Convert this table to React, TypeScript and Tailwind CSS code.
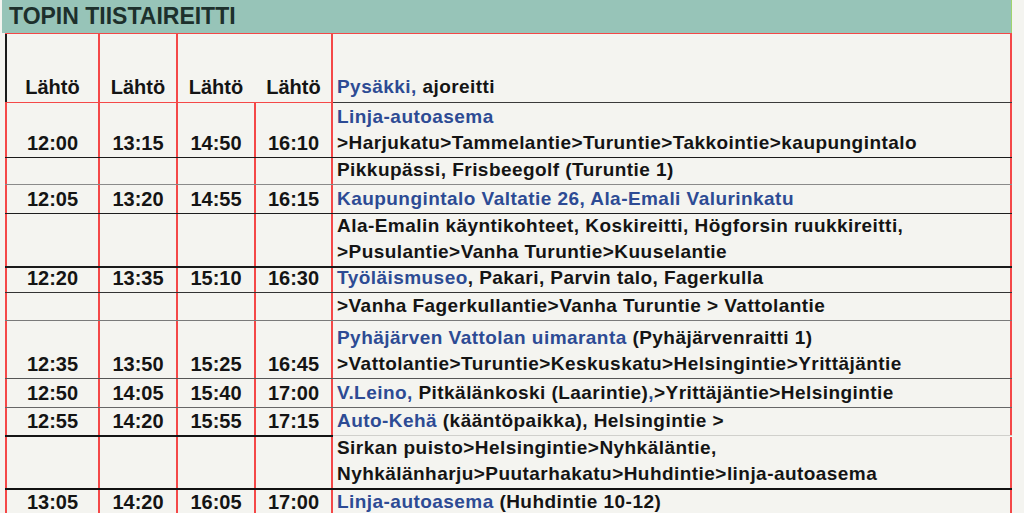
import React from 'react';

type Seg = { t: string; blue?: boolean };

type Row = {
  line: string; // height of the rule above the row
  tl: string; // rule over the time columns
  rl: string; // rule over the route column
  h: string;
  times?: string[];
  lines: Seg[][];
};

const B = (t: string): Seg => ({ t, blue: true });
const K = (t: string): Seg => ({ t });

const timeCols = [
  'w-[95px] border-x-2 border-[#f44848]',
  'w-[78px] border-r-2 border-[#f44848]',
  'w-[78px] border-r-2 border-[#f44848]',
  'w-[77px] border-r-2 border-[#f44848]',
];

const rows: Row[] = [
  {
    line: 'h-px',
    tl: 'h-px bg-[#f44848]',
    rl: 'h-px bg-[#3a3a3a]',
    h: 'h-[54px]',
    times: ['12:00', '13:15', '14:50', '16:10'],
    lines: [[B('Linja-autoasema')], [K('>Harjukatu>Tammelantie>Turuntie>Takkointie>kaupungintalo')]],
  },
  {
    line: 'h-px',
    tl: 'h-px bg-[#1a1a1a]',
    rl: 'h-px bg-[#1a1a1a]',
    h: 'h-[26px]',
    lines: [[K('Pikkupässi, Frisbeegolf (Turuntie 1)')]],
  },
  {
    line: 'h-px',
    tl: 'h-px bg-[#8a8a8a]',
    rl: 'h-px bg-[#8a8a8a]',
    h: 'h-[28px]',
    times: ['12:05', '13:20', '14:55', '16:15'],
    lines: [[B('Kaupungintalo Valtatie 26, Ala-Emali Valurinkatu')]],
  },
  {
    line: 'h-px',
    tl: 'h-px bg-[#1e1e1e]',
    rl: 'h-px bg-[#1e1e1e]',
    h: 'h-[52px]',
    lines: [
      [K('Ala-Emalin käyntikohteet, Koskireitti, Högforsin ruukkireitti,')],
      [K('>Pusulantie>Vanha Turuntie>Kuuselantie')],
    ],
  },
  {
    line: 'h-[2px]',
    tl: 'h-[2px] bg-[#1a1a1a]',
    rl: 'h-[2px] bg-[#1a1a1a]',
    h: 'h-[24px]',
    times: ['12:20', '13:35', '15:10', '16:30'],
    lines: [[B('Työläismuseo'), K(', Pakari, Parvin talo, Fagerkulla')]],
  },
  {
    line: 'h-px',
    tl: 'h-px bg-[#333333]',
    rl: 'h-px bg-[#333333]',
    h: 'h-[27px]',
    lines: [[K('>Vanha Fagerkullantie>Vanha Turuntie > Vattolantie')]],
  },
  {
    line: 'h-px',
    tl: 'h-px bg-[#7a7a7a]',
    rl: 'h-px bg-[#7a7a7a]',
    h: 'h-[57px]',
    times: ['12:35', '13:50', '15:25', '16:45'],
    lines: [
      [B('Pyhäjärven Vattolan uimaranta'), K(' (Pyhäjärvenraitti 1)')],
      [K('>Vattolantie>Turuntie>Keskuskatu>Helsingintie>Yrittäjäntie')],
    ],
  },
  {
    line: 'h-px',
    tl: 'h-px bg-[#555555]',
    rl: 'h-px bg-[#555555]',
    h: 'h-[28px]',
    times: ['12:50', '14:05', '15:40', '17:00'],
    lines: [[B('V.Leino,'), K(' Pitkälänkoski (Laarintie)'), B(','), K('>Yrittäjäntie>Helsingintie')]],
  },
  {
    line: 'h-px',
    tl: 'h-px bg-[#666666]',
    rl: 'h-px bg-[#666666]',
    h: 'h-[27px]',
    times: ['12:55', '14:20', '15:55', '17:15'],
    lines: [[B('Auto-Kehä'), K(' (kääntöpaikka), Helsingintie >')]],
  },
  {
    line: 'h-[2px]',
    tl: 'h-[2px] bg-[#151515]',
    rl: 'h-px bg-[#d0d0cc]',
    h: 'h-[51px]',
    lines: [
      [K('Sirkan puisto>Helsingintie>Nyhkäläntie,')],
      [K('Nyhkälänharju>Puutarhakatu>Huhdintie>linja-autoasema')],
    ],
  },
  {
    line: 'h-[2px]',
    tl: 'h-[2px] bg-[#111111]',
    rl: 'h-[2px] bg-[#111111]',
    h: 'h-[26px]',
    times: ['13:05', '14:20', '16:05', '17:00'],
    lines: [[B('Linja-autoasema'), K(' (Huhdintie 10-12)')]],
  },
];

const Line = ({ segs }: { segs: Seg[] }) => (
  <div className="whitespace-pre">
    {segs.map((s, i) => (
      <span key={i} className={s.blue ? 'text-[#2d4b94]' : 'text-[#141414]'}>
        {s.t}
      </span>
    ))}
  </div>
);

const TableRow = ({ row }: { row: Row }) => (
  <>
    <div className={`flex items-start ${row.line}`}>
      <div className={`w-[328px] ${row.tl}`} />
      <div className={`w-[679px] ${row.rl}`} />
    </div>
    <div className={`flex ${row.h}`}>
      {timeCols.map((w, i) => (
        <div key={i} className={`${w} flex items-end justify-center pb-[1px] text-[20px] text-[#141414]`}>
          {row.times?.[i]}
        </div>
      ))}
      <div className="flex w-[679px] flex-col justify-end border-r-2 border-[#f44848] pb-[1px] pl-[4px] tracking-[0.45px]">
        {row.lines.map((l, i) => (
          <Line key={i} segs={l} />
        ))}
      </div>
    </div>
  </>
);

export default function App() {
  return (
    <div
      className="h-[513px] w-[1024px] overflow-hidden bg-[#f4f4f0] font-bold"
      style={{ fontFamily: '"Liberation Sans", Arial, sans-serif' }}
    >
      <div className="ml-[2px] flex h-[33px] w-[1010px] items-center border-r border-[#9fd46e] bg-[#97c4b8] pl-[7px]">
        <span className="text-[23px] leading-none text-[#1d302c]">TOPIN TIISTAIREITTI</span>
      </div>

      <div className="ml-[5px] text-[19px] leading-[26px]">
        {/* header */}
        <div className="h-px w-[1007px] bg-[#f44848]" />
        <div className="flex h-[68px] text-[20px] text-[#141414]">
          <div className="flex w-[95px] items-end justify-center border-x-2 border-l-[#1a1a1a] border-r-[#f44848] pb-[2px]">
            Lähtö
          </div>
          <div className="flex w-[78px] items-end justify-center border-r-2 border-[#f44848] pb-[2px]">
            Lähtö
          </div>
          <div className="flex w-[78px] items-end justify-center pr-[2px] pb-[2px]">Lähtö</div>
          <div className="flex w-[77px] items-end justify-center border-r-2 border-[#f44848] pb-[2px]">
            Lähtö
          </div>
          <div className="flex w-[679px] items-end border-r-2 border-[#f44848] pb-[2px] pl-[4px] text-[19px] tracking-[0.45px]">
            <span className="text-[#2d4b94]">Pysäkki,</span>
            <span className="whitespace-pre"> ajoreitti</span>
          </div>
        </div>

        {rows.map((r, i) => (
          <TableRow key={i} row={r} />
        ))}
      </div>
    </div>
  );
}
